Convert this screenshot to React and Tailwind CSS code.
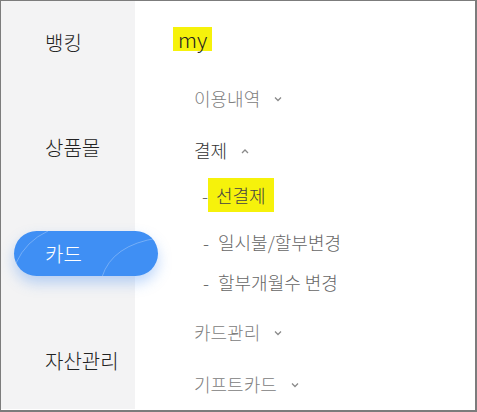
import React from "react";

const FONT = { fontFamily: '"Noto Sans CJK KR", "Noto Sans", sans-serif' };

const Chevron = ({ up = false }) => (
  <svg width="8" height="6" viewBox="0 0 8 6" className="ml-[14px] mt-[2px]">
    <polyline
      points={up ? "1,5 4,2 7,5" : "1,1.5 4,4.5 7,1.5"}
      fill="none"
      stroke="#8a8a8a"
      strokeWidth="1.3"
    />
  </svg>
);

const SideItem = ({ label, className = "" }) => (
  <div className={`ml-[13px] w-[144px] h-[44px] pl-[31px] flex items-center text-[20px] text-[#222] ${className}`}>
    {label}
  </div>
);

export default function App() {
  return (
    <div
      className="w-[477px] h-[412px] bg-white border-l border-t border-r-2 border-b-2 border-[#7c7c7c] flex overflow-hidden font-light"
      style={FONT}
    >
      {/* left menu */}
      <div className="w-[134px] shrink-0 bg-[#f3f3f4] flex flex-col pt-[20px] gap-[61px] relative z-10 border-b border-white">
        <SideItem label="뱅킹" />
        <SideItem label="상품몰" />
        <div className="ml-[13px] w-[144px] h-[45px] rounded-full bg-[#3f8ff4] relative overflow-hidden shadow-[0_7px_14px_rgba(70,140,240,0.35)] pl-[31px] flex items-center text-[20px] text-white">
          <svg className="absolute inset-0" width="144" height="45" viewBox="0 0 144 45">
            <path d="M2 32 Q 12 10 34 0" fill="none" stroke="rgba(255,255,255,0.28)" strokeWidth="1" />
            <path d="M88 46 Q 98 14 144 7" fill="none" stroke="rgba(255,255,255,0.28)" strokeWidth="1" />
          </svg>
          <span className="relative">카드</span>
        </div>
        <SideItem label="자산관리" className="mt-[2px]" />
      </div>

      {/* right content */}
      <div className="flex-1 flex flex-col pt-[26px] pl-[38px] text-[18px] leading-[24px]">
        <div className="flex">
          <span className="bg-[#f6f20b] px-[5px] text-[21px] text-[#222]">my</span>
        </div>
        <div className="mt-[35px] ml-[21px] flex items-center text-[#808080]">
          이용내역 <Chevron />
        </div>
        <div className="mt-[28px] ml-[21px] flex items-center text-[#333]">
          결제 <Chevron up />
        </div>
        <div className="mt-[16px] ml-[29px] flex items-center text-[#666]">
          <span>-</span>
          <span className="bg-[#f6f20b] px-[8px] py-[5px] text-[#444]">선결제</span>
        </div>
        <div className="mt-[18px] ml-[30px] flex items-center text-[#666]">
          <span className="mr-[9px]">-</span>일시불/할부변경
        </div>
        <div className="mt-[16px] ml-[30px] flex items-center text-[#666]">
          <span className="mr-[9px]">-</span>할부개월수 변경
        </div>
        <div className="mt-[26px] ml-[21px] flex items-center text-[#808080]">
          카드관리 <Chevron />
        </div>
        <div className="mt-[28px] ml-[21px] flex items-center text-[#808080]">
          기프트카드 <Chevron />
        </div>
      </div>
    </div>
  );
}
